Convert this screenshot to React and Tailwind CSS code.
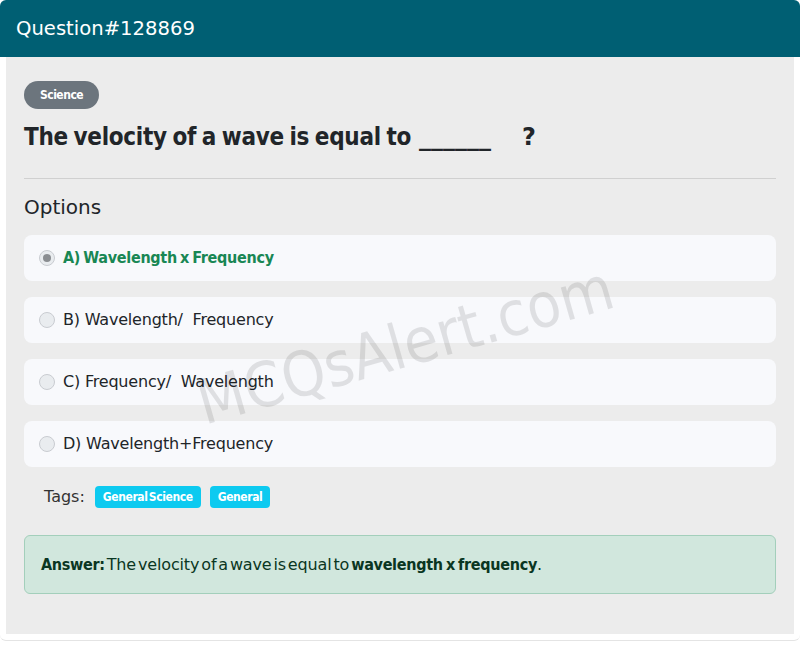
import React from "react";

const options = [
    { label: "A) Wavelength x Frequency", correct: true },
    { label: "B) Wavelength/  Frequency" },
    { label: "C) Frequency/  Wavelength" },
    { label: "D) Wavelength+Frequency" },
];

// bold text on the page is the condensed cut, set a little tight
const cond = {
    fontFamily: '"DejaVu Sans Condensed", "DejaVu Sans", sans-serif',
    letterSpacing: "-0.3px",
    wordSpacing: "-1.5px",
};

function Radio({ checked }) {
    return (
        <span className="flex h-4 w-4 shrink-0 items-center justify-center rounded-full border border-[#c9ccd1] bg-[#e9ecef]">
            {checked && <span className="h-2 w-2 rounded-full bg-[#8a8d91]" />}
        </span>
    );
}

export default function App() {
    return (
        <div
            className="min-h-screen bg-white"
            style={{ fontFamily: '"DejaVu Sans", Verdana, sans-serif' }}
        >
            <div className="rounded-b-md border-b border-[#e4e4e4] pb-[6px]">
                <div className="flex h-[57px] items-center rounded-t-md bg-[#005f73] px-4">
                    <h2 className="text-[19.6px] text-white">Question#128869</h2>
                </div>

                <div className="relative mx-[6px] overflow-hidden bg-[#ececec] px-[18px] pb-[40px] pt-6">
                    <span
                        className="inline-flex h-7 items-center rounded-full bg-[#6c757d] px-4 text-[12px] font-bold text-white"
                        style={{ ...cond, letterSpacing: "-0.5px" }}
                    >
                        Science
                    </span>
                    <h1 className="mt-[12px] flex items-baseline text-[24px] font-bold leading-[32px] text-[#212529]">
                        <span style={cond}>The velocity of a wave is equal to</span>
                        <span className="ml-[8px]">______</span>
                        <span className="ml-[31px]">?</span>
                    </h1>
                    <hr className="mt-[25px] border-[#d0d0d0]" />
                    <div className="mt-[14px] text-[20px] leading-[28px] text-[#212529]">
                        Options
                    </div>

                    <div className="mt-[14px] flex flex-col gap-[16px]">
                        {options.map((o) => (
                            <div
                                key={o.label}
                                className="flex h-[46px] items-center gap-2 rounded-lg bg-[#f8f9fc] px-[15px]"
                            >
                                <Radio checked={o.correct} />
                                <span
                                    className={
                                        o.correct
                                            ? "whitespace-pre text-[16px] font-bold text-[#198754]"
                                            : "whitespace-pre text-[16px] tracking-[-0.2px] text-[#212529]"
                                    }
                                    style={o.correct ? cond : undefined}
                                >
                                    {o.label}
                                </span>
                            </div>
                        ))}
                    </div>

                    <div className="mt-[18px] flex items-center gap-[9px] pl-5">
                        <span className="mr-[1px] text-[16px] text-[#333]">Tags:</span>
                        <span
                            className="rounded bg-[#0dcaf0] px-2 py-[2px] text-[12px] font-bold text-white"
                            style={{ ...cond, letterSpacing: "-0.4px", wordSpacing: "-2px" }}
                        >
                            General Science
                        </span>
                        <span
                            className="rounded bg-[#0dcaf0] px-2 py-[2px] text-[12px] font-bold text-white"
                            style={{ ...cond, letterSpacing: "-0.4px" }}
                        >
                            General
                        </span>
                    </div>

                    <div className="mt-[26px] flex h-[59px] items-center rounded-md border border-[#a3cfbb] bg-[#d1e7dd] px-4 text-[16px] tracking-[-0.15px] text-[#0a3622] [word-spacing:-3px]">
                        <span>
                            <b style={cond}>Answer:</b> The velocity of a wave is equal to{" "}
                            <b style={cond}>wavelength x frequency</b>.
                        </span>
                    </div>

                    <div
                        className="pointer-events-none absolute left-[399px] top-[288px] -translate-x-1/2 -translate-y-1/2 -rotate-[16deg] select-none whitespace-nowrap text-[62px] text-black/10"
                        style={{ fontFamily: '"DejaVu Sans Condensed", "DejaVu Sans", sans-serif' }}
                    >
                        MCQsAlert.com
                    </div>
                </div>
            </div>
        </div>
    );
}
